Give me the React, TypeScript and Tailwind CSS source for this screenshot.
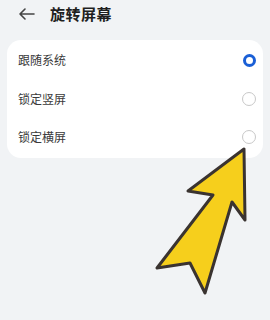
import React from "react";

const font = { fontFamily: '"Noto Sans CJK SC", "Noto Sans", sans-serif' };

const options = [
  { label: "跟随系统", selected: true },
  { label: "锁定竖屏", selected: false },
  { label: "锁定横屏", selected: false },
];

export default function App() {
  return (
    <div
      className="relative w-[270px] h-[320px] overflow-hidden bg-[#f1f3f5] text-[#222]"
      style={font}
    >
      {/* Header */}
      <div className="flex items-center h-[28px] pl-[18px]">
        <svg width="18" height="14" viewBox="0 0 18 14" fill="none" stroke="#444" strokeWidth="1.6" strokeLinecap="round" strokeLinejoin="round">
          <path d="M16 7H2M7 2L2 7l5 5" />
        </svg>
        <span className="ml-[14px] text-[15px] font-bold text-[#1f1f1f] tracking-[0.5px]">旋转屏幕</span>
      </div>

      {/* Options card */}
      <div className="mx-[7px] mt-[12px] rounded-[14px] bg-white py-[1px]">
        {options.map((o) => (
          <div key={o.label} className="flex items-center justify-between h-[38.5px] pl-[11px] pr-[7px]">
            <span className="text-[12px] text-[#3a3a3a]">{o.label}</span>
            {o.selected ? (
              <span className="w-[13px] h-[13px] rounded-full border-[3.5px] border-[#1a5fd6] bg-white" />
            ) : (
              <span className="w-[14px] h-[14px] rounded-full border border-[#c8c8c8] bg-white" />
            )}
          </div>
        ))}
      </div>

      {/* Annotation arrow */}
      <svg className="absolute left-0 top-0" width="270" height="320" viewBox="0 0 270 320">
        <path
          d="M244 149 L245 220 L232 202 L205 293 L190 263 L157 268 L213 195 L188 191 Z"
          fill="#f6cf1c"
          stroke="#3a3330"
          strokeWidth="3"
          strokeLinejoin="round"
        />
      </svg>
    </div>
  );
}
